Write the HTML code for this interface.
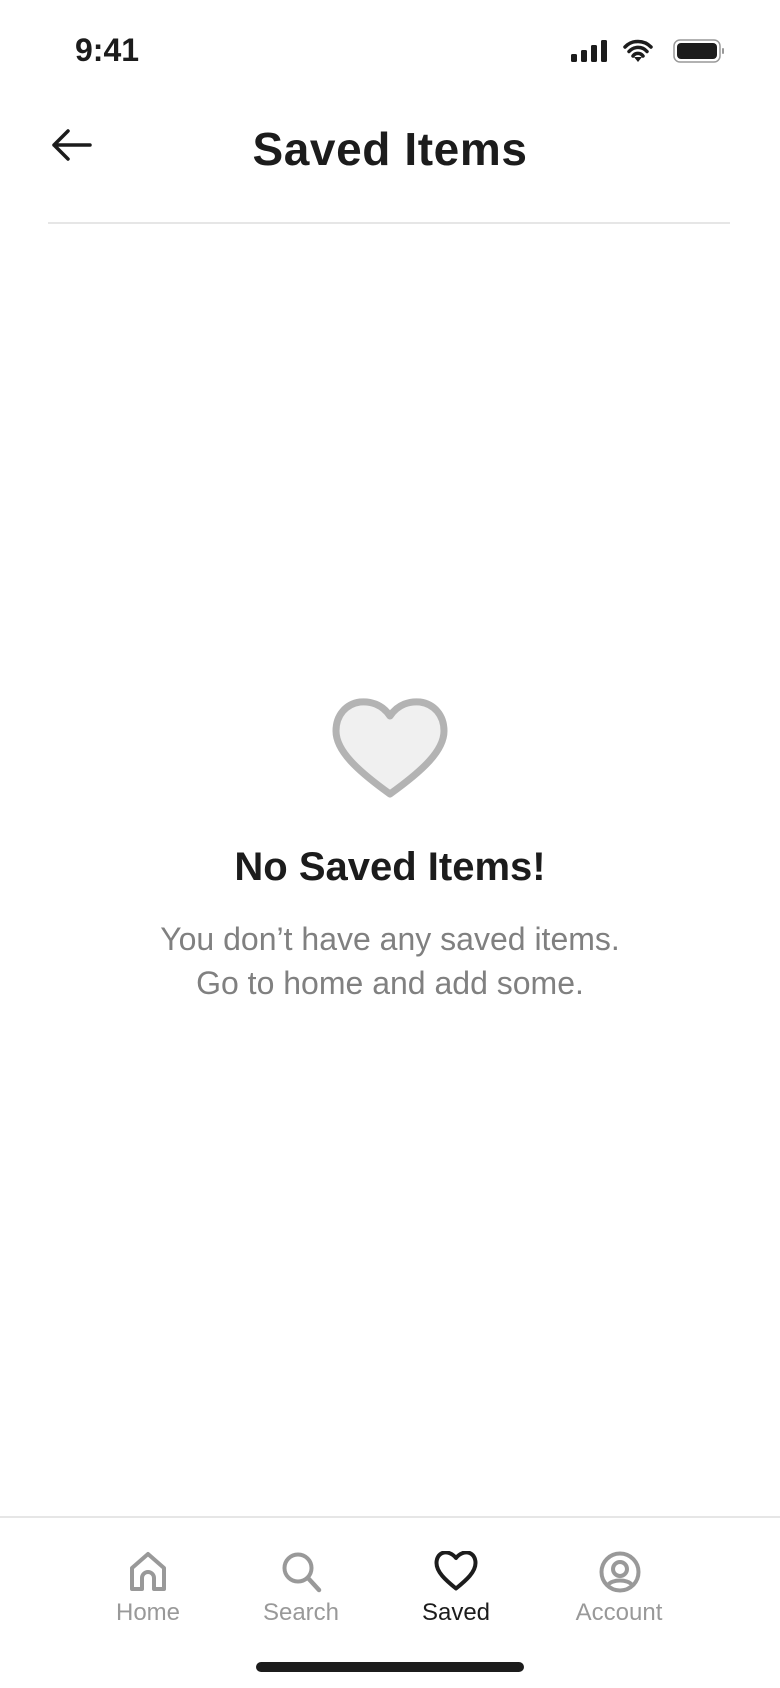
<!DOCTYPE html>
<html><head><meta charset="utf-8"><style>
html,body{margin:0;padding:0;background:#fff;}
body{width:780px;height:1688px;position:relative;overflow:hidden;font-family:"Liberation Sans",sans-serif;color:#1c1c1c;}
.a{position:absolute;}
.c{position:absolute;left:0;width:780px;text-align:center;}
.lbl{position:absolute;width:160px;text-align:center;font-size:24px;color:#999;top:1599px;}
</style></head><body>
<div class="a" style="left:75px;top:32px;font-size:32px;font-weight:600;">9:41</div>
<svg class="a" style="left:570px;top:38px" width="160" height="26" viewBox="0 0 160 26">
<rect x="1" y="16" width="6" height="8" rx="1.5" fill="#1c1c1c"/><rect x="11" y="12" width="6" height="12" rx="1.5" fill="#1c1c1c"/><rect x="21" y="7" width="6" height="17" rx="1.5" fill="#1c1c1c"/><rect x="31" y="2" width="6" height="22" rx="1.5" fill="#1c1c1c"/>
<path d="M55 9a18 18 0 0 1 26 0M59 13.5a12 12 0 0 1 18 0M63 18a6 6 0 0 1 10 0" stroke="#1c1c1c" stroke-width="3.5" fill="none" stroke-linecap="round"/><path d="M64 19l4 5 4-5z" fill="#1c1c1c"/>
<rect x="104" y="2" width="46" height="22" rx="6" fill="none" stroke="#999" stroke-width="1.5"/><rect x="107" y="5" width="40" height="16" rx="4" fill="#1c1c1c"/><rect x="152" y="10" width="2" height="6" rx="1" fill="#999"/>
</svg>
<svg class="a" style="left:50px;top:128px" width="44" height="34" viewBox="0 0 44 34"><path d="M40 17H4M18 3L4 17l14 14" stroke="#1c1c1c" stroke-width="3.5" fill="none" stroke-linecap="round" stroke-linejoin="round"/></svg>
<div class="c" style="top:122px;font-size:46px;font-weight:700;letter-spacing:0.6px;">Saved Items</div>
<div class="a" style="left:48px;top:222px;width:682px;height:2px;background:#e6e6e6"></div>
<svg class="a" style="left:332px;top:698px" width="116" height="102" viewBox="0 0 116 102"><path d="M58 18C50 6 38 3 28 4 14 6 4 17 4 33c0 20 22 40 54 63 32-23 54-43 54-63 0-16-10-27-24-29-10-1-22 2-30 14z" fill="#f0f0f0" stroke="#b3b3b3" stroke-width="7" stroke-linejoin="round"/></svg>
<div class="c" style="top:845px;font-size:40px;font-weight:700;letter-spacing:0px;">No Saved Items!</div>
<div class="c" style="top:917px;font-size:32px;color:#808080;line-height:44px;">You don’t have any saved items.<br>Go to home and add some.</div>
<div class="a" style="left:0;top:1516px;width:780px;height:2px;background:#e6e6e6"></div>
<svg class="a" style="left:128px;top:1551px" width="40" height="42" viewBox="0 0 40 42"><path d="M4 38V17L20 3l16 14v21H26V27a6 6 0 0 0-12 0v11z" fill="none" stroke="#999" stroke-width="4" stroke-linejoin="round"/></svg>
<svg class="a" style="left:280px;top:1550px" width="44" height="44" viewBox="0 0 44 44"><circle cx="18" cy="18" r="13.5" fill="none" stroke="#999" stroke-width="4"/><path d="M28 28l11 12" stroke="#999" stroke-width="4.5" stroke-linecap="round"/></svg>
<svg class="a" style="left:434px;top:1551px" width="44" height="40" viewBox="0 0 44 40"><path d="M22 7C18 2 13 1 10 1.5 5 2.5 2.5 7 2.5 12c0 9 9 17 19.5 25.5C32.5 29 41.5 21 41.5 12c0-5-2.5-9.5-7.5-10.5C31 1 26 2 22 7z" fill="none" stroke="#1c1c1c" stroke-width="4" stroke-linejoin="round"/></svg>
<svg class="a" style="left:598px;top:1550px" width="44" height="44" viewBox="0 0 44 44"><circle cx="22" cy="22" r="18.5" fill="none" stroke="#999" stroke-width="4"/><circle cx="22" cy="19" r="7" fill="none" stroke="#999" stroke-width="4"/><path d="M10 35c4-6 20-6 24 0" fill="none" stroke="#999" stroke-width="4"/></svg>
<div class="lbl" style="left:68px">Home</div>
<div class="lbl" style="left:221px">Search</div>
<div class="lbl" style="left:376px;color:#1c1c1c">Saved</div>
<div class="lbl" style="left:539px">Account</div>
<div class="a" style="left:256px;top:1662px;width:268px;height:10px;border-radius:5px;background:#1c1c1c"></div>
</body></html>
